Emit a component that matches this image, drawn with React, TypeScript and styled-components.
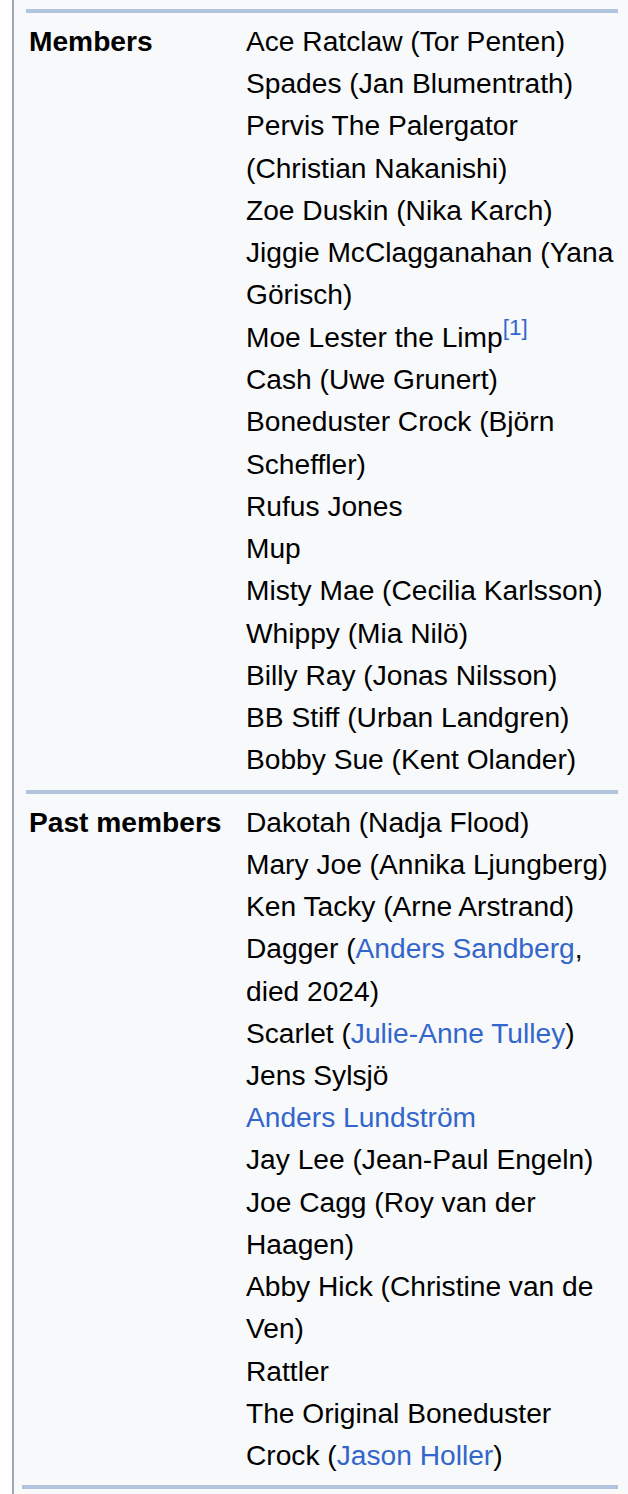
import React from "react";
import styled, { createGlobalStyle } from "styled-components";

const Global = createGlobalStyle`
  html, body { margin: 0; padding: 0; background: #ffffff; }
  body { font-family: "Liberation Sans", Arial, Helvetica, sans-serif; }
`;

const Frame = styled.div`
  margin-left: 12px;
  border-left: 2px solid #a2a9b1;
  background: #f8f9fa;
  min-height: 1494px;
  box-sizing: border-box;
  padding: 9px 10px 0 12px;
  color: #000;
  font-size: 28.16px;
  line-height: 42.24px;
`;

const Section = styled.div`
  display: grid;
  grid-template-columns: 220px 1fr;
  border-top: 4px solid #b0c4de;
  padding: 8px 0;
`;

const Label = styled.div`
  font-weight: bold;
  padding-left: 3px;
  white-space: nowrap;
`;

const List = styled.div`
  display: flex;
  flex-direction: column;
  padding-right: 2px;
`;

const Item = styled.div``;

const Link = styled.a`
  color: #3366cc;
  text-decoration: none;
`;

const Ref = styled.sup`
  color: #3366cc;
  font-size: 0.8em;
  line-height: 1;
  vertical-align: 0.55em;
`;

const EndRule = styled.div`
  border-top: 4px solid #b0c4de;
  margin-left: -4px;
`;

const members: React.ReactNode[] = [
  "Ace Ratclaw (Tor Penten)",
  "Spades (Jan Blumentrath)",
  "Pervis The Palergator (Christian Nakanishi)",
  "Zoe Duskin (Nika Karch)",
  "Jiggie McClagganahan (Yana Görisch)",
  <>
    Moe Lester the Limp<Ref>[1]</Ref>
  </>,
  "Cash (Uwe Grunert)",
  "Boneduster Crock (Björn Scheffler)",
  "Rufus Jones",
  "Mup",
  "Misty Mae (Cecilia Karlsson)",
  "Whippy (Mia Nilö)",
  "Billy Ray (Jonas Nilsson)",
  "BB Stiff (Urban Landgren)",
  "Bobby Sue (Kent Olander)",
];

const past: React.ReactNode[] = [
  "Dakotah (Nadja Flood)",
  "Mary Joe (Annika Ljungberg)",
  "Ken Tacky (Arne Arstrand)",
  <>
    Dagger (<Link href="#">Anders Sandberg</Link>, died 2024)
  </>,
  <>
    Scarlet (<Link href="#">Julie-Anne Tulley</Link>)
  </>,
  "Jens Sylsjö",
  <Link href="#">Anders Lundström</Link>,
  "Jay Lee (Jean-Paul Engeln)",
  "Joe Cagg (Roy van der Haagen)",
  "Abby Hick (Christine van de Ven)",
  "Rattler",
  <>
    The Original Boneduster Crock (<Link href="#">Jason Holler</Link>)
  </>,
];

export default function App() {
  return (
    <>
      <Global />
      <Frame>
        <Section>
          <Label>Members</Label>
          <List>
            {members.map((m, i) => (
              <Item key={i}>{m}</Item>
            ))}
          </List>
        </Section>
        <Section>
          <Label>Past members</Label>
          <List>
            {past.map((m, i) => (
              <Item key={i}>{m}</Item>
            ))}
          </List>
        </Section>
        <EndRule />
      </Frame>
    </>
  );
}
